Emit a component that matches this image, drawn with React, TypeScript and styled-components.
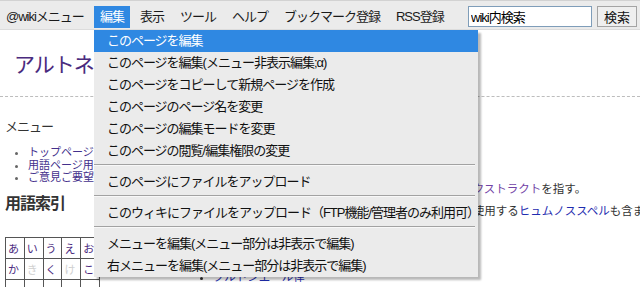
import React from "react";
import styled, { createGlobalStyle } from "styled-components";

const GlobalStyle = createGlobalStyle`
  html, body {
    margin: 0;
    padding: 0;
    background: #fff;
  }
  body {
    width: 640px;
    height: 287px;
    overflow: hidden;
    font-family: "Liberation Sans", "Noto Sans CJK JP", sans-serif;
    color: #333;
  }
`;

const TopBar = styled.div`
  height: 30px;
  box-sizing: border-box;
  background: #ebebeb;
  border-top: 1px solid #d2d2d2;
  border-bottom: 1px solid #dcdcdc;
  padding-top: 5px;
  display: flex;
  align-items: flex-start;
  position: relative;
  z-index: 2;
`;

const MenuBar = styled.ul`
  display: flex;
  gap: 4px;
  flex: 1;
  margin: 0;
  padding: 0;
  list-style: none;
`;

const MenuItem = styled.li<{ $active?: boolean }>`
  position: relative;
  height: 22px;
  line-height: 22px;
  padding: 0 6px;
  font-size: 13px;
  letter-spacing: -1px;
  white-space: nowrap;
  color: ${(p) => (p.$active ? "#fff" : "#1a1a1a")};
  background: ${(p) => (p.$active ? "#2f88e2" : "transparent")};
`;

const SearchForm = styled.form`
  display: flex;
  gap: 5px;
  margin: 0 3px 0 0;
`;

const SearchInput = styled.input`
  width: 124px;
  height: 21px;
  box-sizing: border-box;
  border: 1px solid #7f9db9;
  padding: 0 2px;
  font-family: "Liberation Sans", "Noto Sans CJK JP", sans-serif;
  font-size: 13px;
  letter-spacing: -1px;
  color: #000;
  outline: none;
`;

const SearchButton = styled.button`
  width: 40px;
  height: 21px;
  box-sizing: border-box;
  border: 1px solid #a4a4a4;
  background: #efefef;
  padding: 0;
  font-family: "Liberation Sans", "Noto Sans CJK JP", sans-serif;
  font-size: 13px;
  color: #111;
`;

const Dropdown = styled.ul`
  position: absolute;
  top: calc(100% + 2px);
  left: 0;
  width: 384px;
  margin: 0;
  padding: 0;
  list-style: none;
  background: #ebebeb;
  box-shadow: 3px 3px 2px rgba(0, 0, 0, 0.28);
  letter-spacing: -1px;
`;

const DropItem = styled.li<{ $active?: boolean }>`
  height: 22px;
  line-height: 22px;
  padding-left: 13px;
  font-size: 13px;
  white-space: nowrap;
  color: ${(p) => (p.$active ? "#fff" : "#111")};
  background: ${(p) => (p.$active ? "#2f88e2" : "transparent")};
`;

const DropSeparator = styled.li`
  margin: 2px 3px 5px 0;
  border-top: 1px solid #a2a2a2;
  border-bottom: 1px solid #f8f8f8;
`;

const Title = styled.h1`
  margin: 20px 0 0;
  padding-left: 14px;
  height: 30px;
  line-height: 30px;
  font-size: 21px;
  font-weight: normal;
  letter-spacing: -1px;
  color: #4a2b7e;
  white-space: nowrap;
  border-bottom: 1px dashed #bdbdbd;
  padding-bottom: 16px;
`;

const Columns = styled.div`
  display: flex;
`;

const Sidebar = styled.div`
  width: 100px;
  flex: none;
  padding-left: 5px;
  box-sizing: border-box;
`;

const SideHeading = styled.div<{ $big?: boolean }>`
  margin-top: ${(p) => (p.$big ? "10px" : "21px")};
  height: ${(p) => (p.$big ? "20px" : "18px")};
  line-height: ${(p) => (p.$big ? "20px" : "18px")};
  font-size: ${(p) => (p.$big ? "16px" : "13px")};
  font-weight: ${(p) => (p.$big ? "bold" : "normal")};
  letter-spacing: -1px;
  color: #333;
  white-space: nowrap;
`;

const SideList = styled.ul`
  margin: 10px 0 0;
  padding-left: 23px;
  font-size: 11px;
  line-height: 12.5px;
  white-space: nowrap;
  li {
    color: #666;
  }
`;

const SideLink = styled.span`
  color: #43308c;
`;

const IndexTable = styled.table`
  margin-top: 23px;
  border-collapse: collapse;
`;

const IndexCell = styled.td<{ $empty?: boolean }>`
  width: 19px;
  height: 20px;
  padding: 0 0 0 2px;
  border: 1px solid #555;
  font-size: 11px;
  color: ${(p) => (p.$empty ? "#cfcfcf" : "#4b2a80")};
`;

const Main = styled.div`
  flex: 1;
  min-width: 0;
  overflow: hidden;
  padding: 15px 0 0 5px;
  font-size: 11.5px;
  line-height: 22px;
  color: #333;
  white-space: nowrap;
`;

const Line = styled.div``;

const Link = styled.span<{ $visited?: boolean }>`
  color: ${(p) => (p.$visited ? "#7244a6" : "#1f2db0")};
`;

const SubHeading = styled.div`
  margin-top: 6px;
  font-weight: bold;
`;

const TermList = styled.ul`
  margin: 0;
  padding-left: 54px;
  line-height: 18px;
  list-style: disc;
  ul {
    padding-left: 54px;
    list-style: disc;
  }
`;

const menus = ["表示", "ツール", "ヘルプ", "ブックマーク登録", "RSS登録"];

const editItems: (string | null)[] = [
  "このページを編集",
  "このページを編集(メニュー非表示編集;α)",
  "このページをコピーして新規ページを作成",
  "このページのページ名を変更",
  "このページの編集モードを変更",
  "このページの閲覧/編集権限の変更",
  null,
  "このページにファイルをアップロード",
  null,
  "このウィキにファイルをアップロード（FTP機能/管理者のみ利用可）",
  null,
  "メニューを編集(メニュー部分は非表示で編集)",
  "右メニューを編集(メニュー部分は非表示で編集)",
];

const kanaRows = [
  [
    { c: "あ" },
    { c: "い" },
    { c: "う" },
    { c: "え" },
    { c: "お" },
  ],
  [
    { c: "か" },
    { c: "き", empty: true },
    { c: "く" },
    { c: "け", empty: true },
    { c: "こ" },
  ],
  [
    { c: "" },
    { c: "" },
    { c: "" },
    { c: "" },
    { c: "" },
  ],
];

const App: React.FC = () => {
  return (
    <>
      <GlobalStyle />
      <TopBar>
        <MenuBar>
          <MenuItem>@wikiメニュー</MenuItem>
          <MenuItem $active>
            編集
            <Dropdown>
              {editItems.map((item, index) =>
                item === null ? (
                  <DropSeparator key={index} />
                ) : (
                  <DropItem key={index} $active={index === 0}>
                    {item}
                  </DropItem>
                )
              )}
            </Dropdown>
          </MenuItem>
          {menus.map((m) => (
            <MenuItem key={m}>{m}</MenuItem>
          ))}
        </MenuBar>
        <SearchForm onSubmit={(e) => e.preventDefault()}>
          <SearchInput defaultValue="wiki内検索" />
          <SearchButton type="submit">検索</SearchButton>
        </SearchForm>
      </TopBar>

      <Title>アルトネリコ用語辞典</Title>

      <Columns>
        <Sidebar>
          <SideHeading>メニュー</SideHeading>
          <SideList>
            <li>
              <SideLink>トップページ</SideLink>
            </li>
            <li>
              <SideLink>用語ページ用テンプレ</SideLink>
            </li>
            <li>
              <SideLink>ご意見ご要望</SideLink>
            </li>
          </SideList>
          <SideHeading $big>用語索引</SideHeading>
          <IndexTable>
            <tbody>
              {kanaRows.map((row, r) => (
                <tr key={r}>
                  {row.map((cell, c) => (
                    <IndexCell key={c} $empty={cell.empty}>
                      {cell.c}
                    </IndexCell>
                  ))}
                </tr>
              ))}
            </tbody>
          </IndexTable>
        </Sidebar>

        <Main>
          <Line>詩魔法</Line>
          <Line>分類：用語／魔法</Line>
          <Line>概要</Line>
          <Line>
            詩魔法とは、レーヴァテイルが詩を謳うことで発動する魔法、および
            <Link $visited>エクストラクト</Link>を指す。
          </Line>
          <Line>
            また広義には、ヒュムノス語を用いて人間やレーヴァテイルが詩魔法を使用する
            <Link>ヒュムノススペル</Link>も含まれる。
          </Line>
          <SubHeading>関連項目</SubHeading>
          <TermList>
            <li>
              <Link>詩魔法</Link>
              <ul>
                <li>
                  <Link>クルトンエール律</Link>
                </li>
              </ul>
            </li>
          </TermList>
        </Main>
      </Columns>
    </>
  );
};

export default App;
